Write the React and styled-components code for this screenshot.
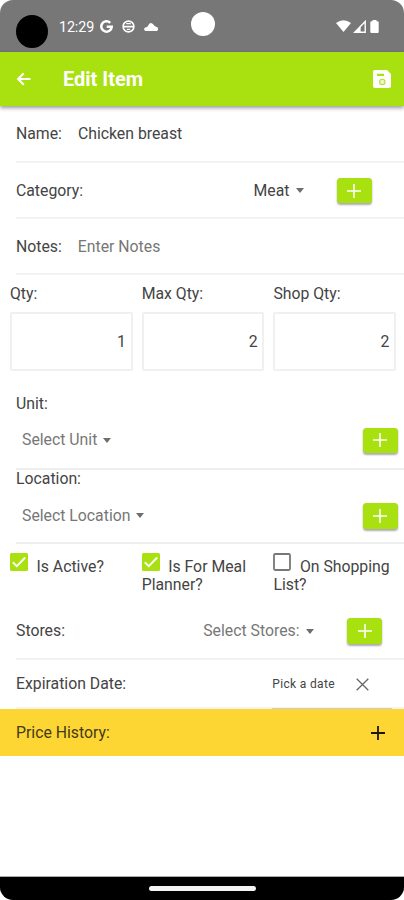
import React from "react";
import styled, { createGlobalStyle } from "styled-components";

const GlobalStyle = createGlobalStyle`
  *, *::before, *::after { box-sizing: border-box; }
  body { margin: 0; background: #fff; }
`;

const Phone = styled.div`
  width: 404px;
  height: 900px;
  display: flex;
  flex-direction: column;
  overflow: hidden;
  border-radius: 13px;
  background: #fff;
  color: #444;
  font-family: Roboto, sans-serif;
  font-size: 15.8px;
  line-height: 18px;
  white-space: nowrap;
`;

const StatusBar = styled.header`
  position: relative;
  height: 51.5px;
  flex: none;
  display: flex;
  align-items: center;
  padding: 1px 25px 0 16px;
  background: #777;
  color: #fff;
`;

const Avatar = styled.span`
  width: 32px;
  height: 33px;
  border-radius: 50%;
  background: #000;
  margin: 10px 11px 0 0;
`;

const Clock = styled.span`
  width: 41px;
  font-size: 14.3px;
  letter-spacing: -0.1px;
  margin-top: 1px;
`;

const Camera = styled.span`
  position: absolute;
  left: 191px;
  top: 12px;
  width: 24px;
  height: 24px;
  border-radius: 50%;
  background: #fff;
`;

const StatusIcons = styled.span`
  display: flex;
  align-items: center;
  gap: ${(p) => p.$gap}px;
  margin-left: ${(p) => (p.$end ? "auto" : "0")};
`;

const AppBar = styled.div`
  height: 54.5px;
  flex: none;
  display: flex;
  align-items: center;
  padding: 1px 13px 0 16px;
  background: #a8e010;
  color: #fff;
  box-shadow: 0 2px 4px rgba(0, 0, 0, 0.4);
  z-index: 1;
`;

const Title = styled.h1`
  flex: 1;
  margin: 0 0 0 31px;
  font-size: 20px;
  font-weight: 700;
  line-height: 24px;
`;

const Form = styled.main`
  flex: 1;
  display: flex;
  flex-direction: column;
`;

const Row = styled.div`
  height: ${(p) => p.$height}px;
  flex: none;
  display: flex;
  align-items: center;
  margin-left: 16px;
  padding-top: 1px;
  padding-right: ${(p) => p.$right || 0}px;
  border-bottom: 2px solid #f2f2f2;
`;

const Label = styled.span`
  letter-spacing: 0;
`;

const Value = styled.span`
  margin-left: 16px;
  letter-spacing: ${(p) => p.$spacing ?? 0}px;
  color: ${(p) => (p.$muted ? "#777" : "#444")};
`;

const Picker = styled.span`
  display: flex;
  align-items: center;
  gap: 6px;
  margin-left: ${(p) => (p.$end ? "auto" : "6px")};
  margin-right: ${(p) => p.$right || 0}px;
  color: ${(p) => (p.$muted ? "#777" : "#444")};
`;

const Caret = styled.i`
  border: 4.5px solid transparent;
  border-top: 5.5px solid #6e6e6e;
  border-bottom: 0;
`;

const AddButton = styled.button`
  width: 35px;
  height: 25.5px;
  flex: none;
  display: grid;
  place-items: center;
  padding: 0;
  border: 0;
  border-radius: 3.5px;
  background: #a8e010;
  color: #fff;
  box-shadow: 0 1.5px 2px rgba(0, 0, 0, 0.33);
`;

const Quantities = styled.section`
  height: 118px;
  flex: none;
  display: grid;
  grid-template-columns: repeat(3, 122.5px);
  column-gap: 9.2px;
  align-content: start;
  padding: 10px 0 0 10px;
`;

const Quantity = styled.label`
  display: flex;
  flex-direction: column;
  gap: 9px;
`;

const NumberBox = styled.span`
  height: 59px;
  display: flex;
  align-items: center;
  justify-content: flex-end;
  padding-right: 4.5px;
  border: 2px solid #f0f0f0;
  border-radius: 2px;
`;

const StackedField = styled.section`
  height: ${(p) => p.$height}px;
  flex: none;
  display: flex;
  flex-direction: column;
  margin-left: 16px;
  padding: ${(p) => p.$top}px 6.5px 0 0;
  border-bottom: 2px solid #eee;
`;

const FieldLine = styled.div`
  display: flex;
  align-items: center;
  justify-content: space-between;
  margin-top: ${(p) => p.$top}px;
`;

const Checks = styled.section`
  height: 59px;
  flex: none;
  display: grid;
  grid-template-columns: repeat(3, 122.5px);
  column-gap: 9.2px;
  padding: 8px 0 0 10px;
  white-space: normal;
`;

const Check = styled.label`
  svg {
    float: left;
    margin: 0.5px 8.5px 0 0;
  }
`;

const CheckText = styled.span`
  display: block;
  padding-top: 5.5px;
`;

const DateLink = styled.span`
  margin-left: auto;
  margin-right: 21px;
  font-size: 12px;
  letter-spacing: 0.35px;
`;

const DateUnderline = styled.div`
  width: 120px;
  height: 1px;
  flex: none;
  margin: -1px 0 0 272px;
  background: #ccc;
`;

const PriceHistory = styled.section`
  height: 47px;
  flex: none;
  display: flex;
  align-items: center;
  justify-content: space-between;
  padding: 0 19px 0 16px;
  background: #fdd633;
  color: #443a1a;
`;

const NavBar = styled.footer`
  height: 23px;
  flex: none;
  display: flex;
  justify-content: center;
  padding-top: 9px;
  background: #000;
  box-shadow: 0 -1px 0 #aaa;
`;

const NavHandle = styled.span`
  width: 107px;
  height: 5px;
  border-radius: 3px;
  background: #f4f4f4;
`;

const Plus = ({ size = 14, width = 1.6, color = "currentColor" }) => (
  <svg width={size} height={size} viewBox="0 0 14 14" fill="none" stroke={color} strokeWidth={width}>
    <path d="M7 0v14M0 7h14" />
  </svg>
);

const GoogleIcon = () => (
  <svg width="13" height="13" viewBox="0 0 13 13" fill="none" stroke="#fff" strokeWidth="2.5">
    <path d="M10.2 2.8A5.2 5.2 0 1 0 11.7 6.8H6.7" />
  </svg>
);

const GlobeIcon = () => (
  <svg width="13" height="13" viewBox="0 0 13 13" fill="none" stroke="#fff" strokeWidth="1.6">
    <circle cx="6.5" cy="6.5" r="5.4" />
    <path d="M1.5 6.7h10" strokeWidth="1.8" />
    <path d="M4.2 3.6h4.6M4.8 9.4h3.4" strokeWidth="1.2" />
  </svg>
);

const CloudIcon = () => (
  <svg width="15" height="9" viewBox="0 0 15 9" fill="#fff">
    <path d="M1.8 9A1.8 1.8 0 0 1 2.4 5.2Q3.7 4.9 4.3 3.2 6.6-1 9.6 2.8 10.4 4.4 12 4.8A2.2 2.2 0 0 1 12.8 9Z" />
  </svg>
);

const WifiIcon = () => (
  <svg width="15" height="12" viewBox="0 0 15 12" fill="#fff">
    <path d="M0 3Q7.5-2.6 15 3L7.5 12Z" />
  </svg>
);

const SignalIcon = () => (
  <svg width="13" height="13" viewBox="0 0 13 13">
    <path d="M1.8 12.2 12.2 1.5V12.2Z" fill="none" stroke="#fff" strokeWidth="1.4" />
    <path d="M1 12.6 7.6 6V12.6Z" fill="#fff" />
  </svg>
);

const BatteryIcon = () => (
  <svg width="9" height="13" viewBox="0 0 9 13" fill="#fff">
    <path d="M2.5 0h4v1.3H7.5Q8.7 1.3 8.7 2.5V11.8Q8.7 13 7.5 13H1.5Q.3 13 .3 11.8V2.5Q.3 1.3 1.5 1.3h1Z" />
  </svg>
);

const BackIcon = () => (
  <svg width="16" height="14" viewBox="0 0 16 14" fill="none" stroke="#fff" strokeWidth="2">
    <path d="M14.5 7H2.5M7.8 1.2 2 7l5.8 5.8" />
  </svg>
);

const SaveIcon = () => (
  <svg width="18" height="18" viewBox="0 0 18 18">
    <path d="M2 0H14L18 4V16Q18 18 16 18H2Q0 18 0 16V2Q0 0 2 0Z" fill="#fff" />
    <path d="M4 4.8h7" stroke="#a8e010" strokeWidth="2.2" />
    <circle cx="9.3" cy="12" r="2.7" fill="#e9f8c4" stroke="#b3e22f" strokeWidth="1.1" />
  </svg>
);

const CheckBox = ({ checked }) => (
  <svg width="18" height="18" viewBox="0 0 18 18" fill="none">
    {checked ? (
      <>
        <rect width="18" height="18" rx="1.5" fill="#a8e010" />
        <path d="M2.8 9.3 6.8 13.2 15.2 4.5" stroke="#fff" strokeWidth="1.9" />
      </>
    ) : (
      <rect x="1" y="1" width="16" height="16" rx="1.2" stroke="#777" strokeWidth="1.8" />
    )}
  </svg>
);

const CloseIcon = () => (
  <svg width="13" height="13" viewBox="0 0 13 13" stroke="#666" strokeWidth="1.3">
    <path d="m.7.7 11.6 11.6M12.3.7.7 12.3" />
  </svg>
);

const quantities = [
  { label: "Qty:", value: 1 },
  { label: "Max Qty:", value: 2 },
  { label: "Shop Qty:", value: 2 },
];

const flags = [
  { label: "Is Active?", checked: true },
  { label: "Is For Meal Planner?", checked: true },
  { label: "On Shopping List?", checked: false },
];

export default function App() {
  return (
    <>
      <GlobalStyle />
      <Phone>
        <StatusBar>
          <Avatar />
          <Clock>12:29</Clock>
          <StatusIcons $gap={9}>
            <GoogleIcon />
            <GlobeIcon />
            <CloudIcon />
          </StatusIcons>
          <Camera />
          <StatusIcons $gap={2} $end>
            <WifiIcon />
            <SignalIcon />
            <span />
            <BatteryIcon />
          </StatusIcons>
        </StatusBar>
        <AppBar>
          <BackIcon />
          <Title>Edit Item</Title>
          <SaveIcon />
        </AppBar>
        <Form>
          <Row $height={57}>
            <Label>Name:</Label>
            <Value>Chicken breast</Value>
          </Row>
          <Row $height={56} $right={32.5}>
            <Label>Category:</Label>
            <Picker $end $right={33}>
              Meat <Caret />
            </Picker>
            <AddButton><Plus /></AddButton>
          </Row>
          <Row $height={56}>
            <Label>Notes:</Label>
            <Value $muted>Enter Notes</Value>
          </Row>
          <Quantities>
            {quantities.map((q) => (
              <Quantity key={q.label}>
                <Label>{q.label}</Label>
                <NumberBox>{q.value}</NumberBox>
              </Quantity>
            ))}
          </Quantities>
          <StackedField $height={77} $top={1.5}>
            <Label>Unit:</Label>
            <FieldLine $top={15}>
              <Picker $muted>Select Unit <Caret /></Picker>
              <AddButton><Plus /></AddButton>
            </FieldLine>
          </StackedField>
          <StackedField $height={74} $top={0}>
            <Label>Location:</Label>
            <FieldLine $top={15}>
              <Picker $muted>Select Location <Caret /></Picker>
              <AddButton><Plus /></AddButton>
            </FieldLine>
          </StackedField>
          <Checks>
            {flags.map((f) => (
              <Check key={f.label}>
                <CheckBox checked={f.checked} />
                <CheckText>{f.label}</CheckText>
              </Check>
            ))}
          </Checks>
          <Row $height={57} $right={22}>
            <Label>Stores:</Label>
            <Picker $muted $end $right={33.5}>
              Select Stores: <Caret />
            </Picker>
            <AddButton><Plus /></AddButton>
          </Row>
          <Row $height={49} $right={35}>
            <Label>Expiration Date:</Label>
            <DateLink>Pick a date</DateLink>
            <CloseIcon />
          </Row>
          <DateUnderline />
          <PriceHistory>
            <Label>Price History:</Label>
            <Plus width={1.8} color="#1c1804" />
          </PriceHistory>
        </Form>
        <NavBar>
          <NavHandle />
        </NavBar>
      </Phone>
    </>
  );
}
